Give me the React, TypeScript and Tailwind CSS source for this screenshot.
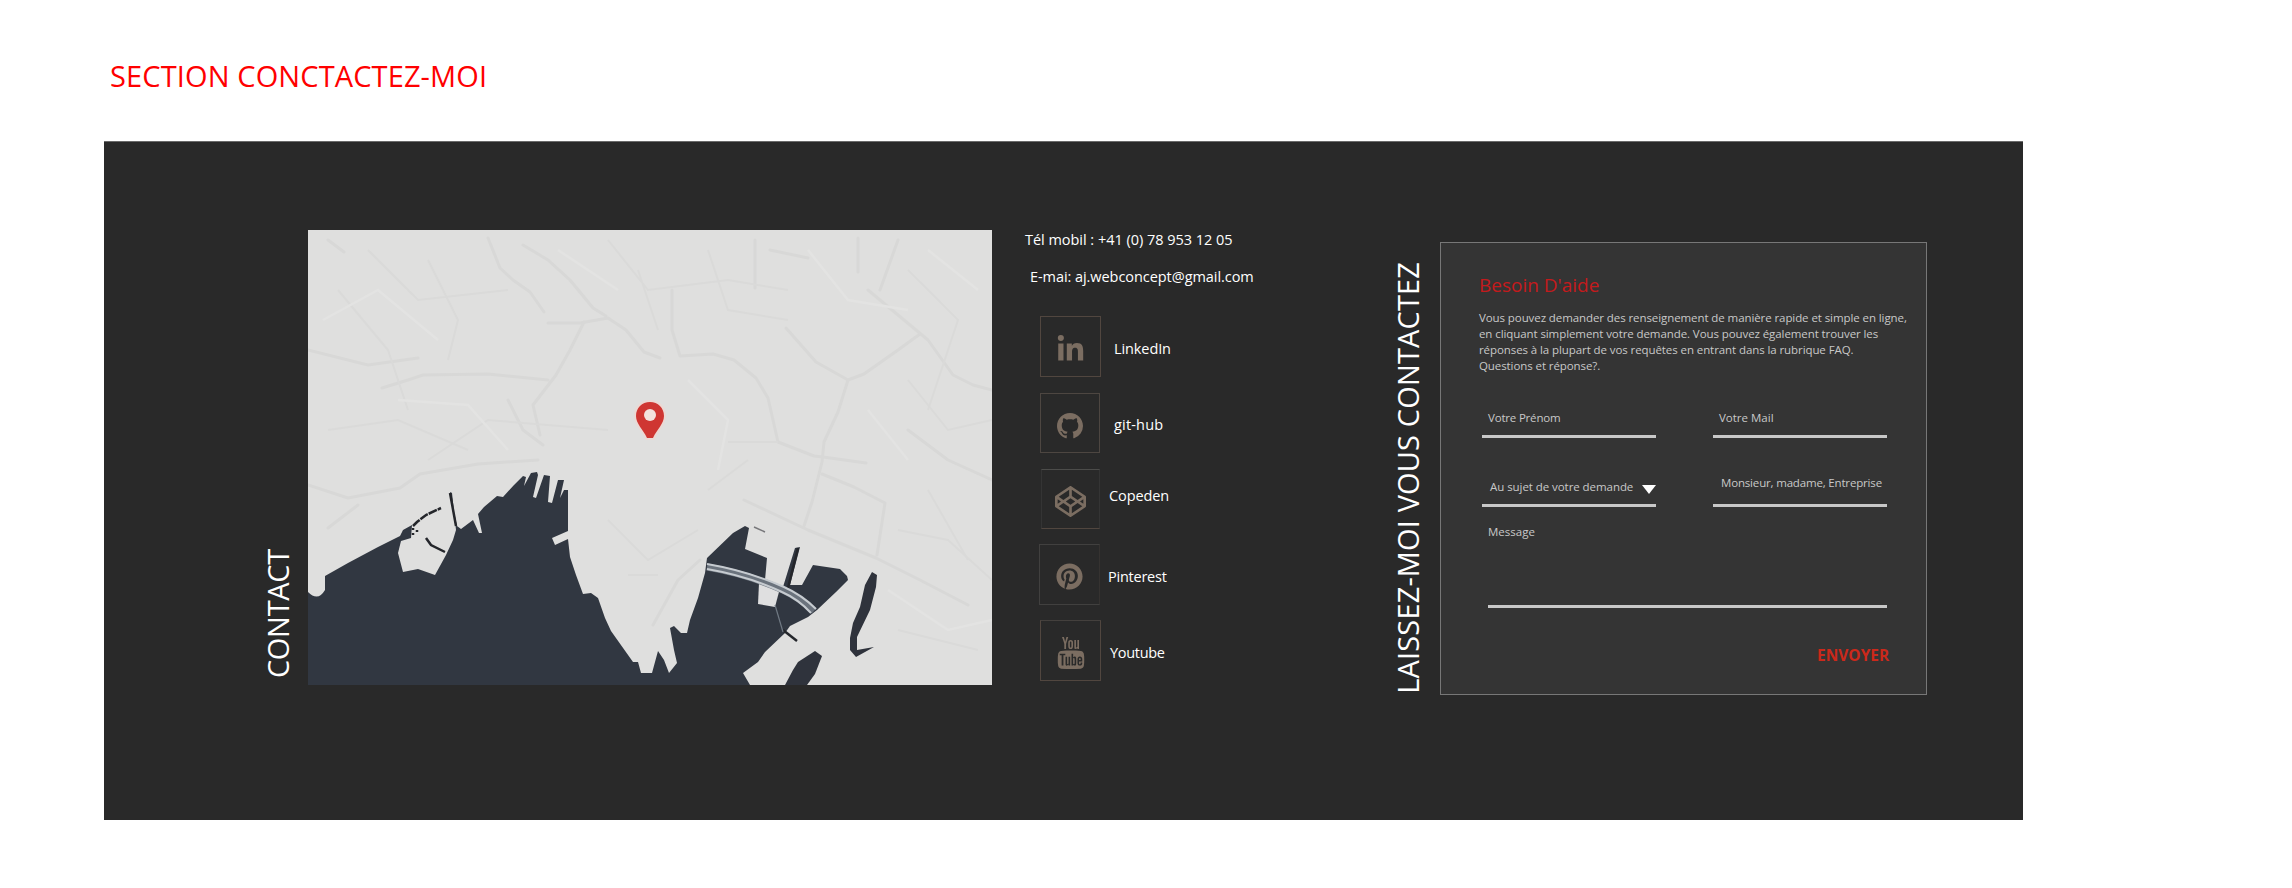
import type { ReactNode } from "react";
import { FaLinkedinIn, FaCodepen, FaPinterest } from "react-icons/fa";
import { TfiYoutube } from "react-icons/tfi";

function GithubMark({ className }: { className: string }) {
  return (
    <svg viewBox="0 0 16 16" fill="currentColor" className={className}>
      <path d="M8 0C3.58 0 0 3.58 0 8c0 3.54 2.29 6.53 5.47 7.59.4.07.55-.17.55-.38 0-.19-.01-.82-.01-1.49-2.01.37-2.53-.49-2.69-.94-.09-.23-.48-.94-.82-1.13-.28-.15-.68-.52-.01-.53.63-.01 1.08.58 1.23.82.72 1.21 1.87.87 2.33.66.07-.52.28-.87.51-1.07-1.78-.2-3.64-.89-3.64-3.95 0-.87.31-1.59.82-2.15-.08-.2-.36-1.02.08-2.12 0 0 .67-.21 2.2.82.64-.18 1.32-.27 2-.27s1.36.09 2 .27c1.53-1.04 2.2-.82 2.2-.82.44 1.1.16 1.92.08 2.12.51.56.82 1.27.82 2.15 0 3.07-1.87 3.75-3.65 3.95.29.25.54.73.54 1.48 0 1.07-.01 1.93-.01 2.2 0 .21.15.46.55.38A8.01 8.01 0 0 0 16 8c0-4.42-3.58-8-8-8z" />
    </svg>
  );
}

function CityMap() {
  return (
    <svg viewBox="0 0 684 455" className="block h-[455px] w-[684px]">
      <rect width="684" height="455" fill="#dfdfde" />

      <g fill="none" stroke="#d8d8d7" strokeWidth="3" strokeLinecap="round" strokeLinejoin="round">
        <path d="M20 10L36 22M180 8L192 38L205 50L222 62L236 82" />
        <path d="M215 15L240 30L262 50L285 78L298 86" />
        <path d="M240 93H272L300 88L318 100L336 122L352 128" />
        <path d="M276 92L262 120L248 145L225 175L232 205" />
        <path d="M74 158L100 150L115 145L180 144L240 150" />
        <path d="M0 255L40 268L92 258L112 244L170 234L230 230" />
        <path d="M20 298L50 275M0 120L60 135L110 128" />
        <path d="M364 60V100L372 126L405 124L426 130L448 148L460 168L470 212L506 226L515 227L558 233" />
        <path d="M447 10V58M550 8V42M462 20L500 28" />
        <path d="M478 98L508 132L540 150L556 144L590 120L612 104" />
        <path d="M540 150L530 182L516 212L514 232L504 272L496 296" />
        <path d="M514 244L546 257L577 273L569 325" />
        <path d="M436 270L500 300L568 328L612 350L660 375" />
        <path d="M560 60L590 85L620 110L645 145L665 155L684 160" />
        <path d="M345 395L370 350L392 330M200 170L215 200L235 215" />
        <path d="M684 250L640 230L600 200M590 10L572 60" />
      </g>
      <g fill="none" stroke="#dadad9" strokeWidth="2">
        <path d="M30 60L80 120L100 180M120 30L150 90L140 130M20 200L90 190L160 220M60 20L110 70L200 60" />
        <path d="M330 40L350 100M400 20L420 80L480 90M600 40L650 90L620 180M300 10L340 60L420 50L480 60" />
        <path d="M400 260L440 230M620 260L660 330M590 400L670 420M300 290L340 330L390 300M320 345H350" />
        <path d="M120 230L180 190L300 200M420 212H470M600 150L640 200L684 190M590 300L640 310L684 350" />
      </g>
      <g fill="none" stroke="#e3e3e2" strokeWidth="2.5">
        <path d="M15 90L70 60L130 110M90 170L160 175L200 220M250 20L310 60M380 150L420 190L410 240" />
        <path d="M500 20L540 70L600 80M560 180L600 230M620 20L670 60M580 360L640 400L684 390" />
      </g>

      <path
        fill="#313741"
        d="M0 362Q10 372 17 360V346L40 333L70 317L92 306L95 300L104 295L103 308L93 311L90 323L95 342L110 339L127 345L138 325L145 310L148 300L144 263L142 262L149 296L153 299L165 290L171 303L174 303L170 284L176 277L189 266L195 267L206 255L215 246L218 247L216 256L223 243L229 242L230 245L225 267L228 268L236 245L242 246L240 272L244 273L250 250L256 250L252 268L256 260L260 260V301L244 308L247 315L260 309L262 327L268 345L275 364L283 363L290 368L297 388L303 401L325 432L330 432L333 443L344 443L350 421L356 430L361 443L369 433L366 420L362 398L366 396L373 403L379 403L382 390L390 368L397 343L399 328L425 303L437 296L441 298L437 319L459 328L457 350L475 357L487 318L492 317L482 355L494 355L505 335L532 339L539 346L540 350L528 362L509 380L500 387L482 396L477 403L457 422L450 432L435 443L442 455H0Z"
      />
      <path d="M451 353L472 358L467 377L450 374Z" fill="#dfdfe0" />
      <g fill="#2f333c">
        <path d="M477 455L485 440L490 432L507 421L514 426L507 444L499 455Z" />
        <path d="M564 342L569 345L568 357L562 380L549 407L549 420L566 417L548 427L542 420V408L545 393L552 377L557 355Z" />
      </g>
      <g fill="none" stroke="#24262b" strokeWidth="2.5">
        <path d="M105 296L109 292L118 285L133 278" strokeDasharray="9 1" />
        <path d="M118 308L123 315L137 322" />
        <path d="M142 263L148 296M490 318L480 358" />
        <path d="M475 400L489 411" />
        <path d="M446 297L457 302" strokeWidth="1.5" stroke="#77777a" />
        <path d="M105 298V308M109 300V304" strokeDasharray="2 3" />
      </g>
      <path d="M467 375L475 402" fill="none" stroke="#707983" strokeWidth="1.2" />
      <path d="M399 337Q440 344 475 360Q492 368 506 381" fill="none" stroke="#6b737d" strokeWidth="7" />
      <path
        d="M399 334Q440 341 476 357Q494 365 508 379M399 339Q440 346 474 362Q490 369 503 383"
        fill="none"
        stroke="#c6cbd0"
        strokeWidth="2"
      />

      <path
        d="M342 172C334 172 328 178 328 186C328 194 335 199 339 208H345C349 199 356 194 356 186C356 178 350 172 342 172Z"
        fill="#cf3632"
        stroke="#ecd9d4"
        strokeWidth="4"
        paintOrder="stroke"
      />
      <circle cx="342" cy="185" r="6" fill="#f3e3de" />
    </svg>
  );
}

type SocialProps = { box: string; label: string; icon: ReactNode; children: string };

function Social({ box, label, icon, children }: SocialProps) {
  return (
    <div className="flex items-start">
      <div className={`flex shrink-0 items-start justify-center border text-[#7b6d61] ${box}`}>{icon}</div>
      <div className={`text-[14.5px] leading-5 ${label}`}>{children}</div>
    </div>
  );
}

export default function App() {
  return (
    <div className="flex h-[888px] w-[2292px] flex-col bg-white font-['Open_Sans',sans-serif] whitespace-nowrap text-white">
      <h1 className="pt-[56px] pl-[110px] text-[29px] leading-[40px] tracking-[0.12px] text-[#ff0000]">SECTION CONCTACTEZ-MOI</h1>

      <section className="mt-[45px] ml-[104px] flex h-[679px] w-[1919px] items-start border-t border-[#6a6a6a] bg-[#292929]">
        <div className="ml-[154px] flex h-[536px] w-[40px] items-end">
          <h2 className="rotate-180 text-[29px] leading-[40px] tracking-[-0.3px] [writing-mode:vertical-rl]">CONTACT</h2>
        </div>

        <div className="mt-[88px] ml-[10px]">
          <CityMap />
        </div>

        <div className="mt-[88px] ml-[33px] flex w-[300px] flex-col">
          <div className="text-[14.5px] leading-5 tracking-[-0.03px]">Tél mobil : +41 (0) 78 953 12 05</div>
          <div className="mt-[17px] ml-[5px] text-[14.5px] leading-5 tracking-[-0.06px]">E-mai: aj.webconcept@gmail.com</div>

          <div className="mt-[29px] ml-[14px] flex flex-col">
            <Social
              box="ml-px h-[61px] w-[61px] border-[#51463f] pt-[18px]"
              label="mt-[23px] ml-[13px] tracking-[-0.1px]"
              icon={<FaLinkedinIn className="h-[29px] w-[29px]" />}
            >
              LinkedIn
            </Social>
            <Social
              box="mt-[16px] ml-px h-[60px] w-[60px] border-[#4d4641] pt-[19px]"
              label="mt-[38px] ml-[14px] tracking-[0.18px]"
              icon={<GithubMark className="h-[26px] w-[26px]" />}
            >
              git-hub
            </Social>
            <Social
              box="mt-[16px] ml-[2px] h-[60px] w-[59px] border-x-[#343434] border-t-[#4c4c4a] border-b-[#51463f] pt-[16px]"
              label="mt-[33px] ml-[9px] tracking-[-0.1px]"
              icon={<FaCodepen className="h-[31px] w-[31px]" />}
            >
              Copeden
            </Social>
            <Social
              box="mt-[15px] h-[61px] w-[61px] border-[#41403f] border-r-[#353230] pt-[18px]"
              label="mt-[38px] ml-[8px] tracking-[-0.24px]"
              icon={<FaPinterest className="h-[27px] w-[27px]" />}
            >
              Pinterest
            </Social>
            <Social
              box="mt-[15px] ml-px h-[61px] w-[61px] border-[#51463f] border-t-[#44403d] pt-[16px]"
              label="mt-[38px] ml-[9px] tracking-[-0.31px]"
              icon={<TfiYoutube className="h-[32px] w-[32px]" />}
            >
              Youtube
            </Social>
          </div>
        </div>

        <div className="ml-[63px] flex h-[552px] w-[40px] items-end">
          <h2 className="rotate-180 text-[29px] leading-[40px] tracking-[0.14px] [writing-mode:vertical-rl]">
            LAISSEZ-MOI VOUS CONTACTEZ
          </h2>
        </div>

        <form className="mt-[100px] ml-[12px] flex h-[453px] w-[487px] flex-col border border-[#777777] bg-[#343434] pt-[30px] pl-[38px] text-[11.5px] leading-4 text-[#c8c8c8]">
          <h3 className="text-[19px] leading-6 text-[#c41a1c]">Besoin D'aide</h3>
          <p className="mt-[13px] tracking-[-0.085px]">
            Vous pouvez demander des renseignement de manière rapide et simple en ligne,
            <br />
            en cliquant simplement votre demande. Vous pouvez également trouver les
            <br />
            réponses à la plupart de vos requêtes en entrant dans la rubrique FAQ.
            <br />
            Questions et réponse?.
          </p>

          <div className="mt-[36px] ml-[3px] flex gap-[57px]">
            <label className="w-[174px] border-b-3 border-[#c8c8c8] pb-[9px] pl-[6px] tracking-[-0.19px]">Votre Prénom</label>
            <label className="w-[174px] border-b-3 border-[#c8c8c8] pb-[9px] pl-[6px]">Votre Mail</label>
          </div>

          <div className="mt-[37px] ml-[3px] flex h-[32px] gap-[57px]">
            <div className="flex w-[174px] items-start border-b-3 border-[#c8c8c8] pt-[4px] pl-[8px] tracking-[-0.06px]">
              <span>Au sujet de votre demande</span>
              <svg viewBox="0 0 14 9" className="mt-[6px] ml-auto h-[9px] w-[14px] shrink-0">
                <path d="M0 0H14L7 9Z" fill="#fff" />
              </svg>
            </div>
            <div className="w-[174px] border-b-3 border-[#c8c8c8] pl-[8px] tracking-[-0.17px]">Monsieur, madame, Entreprise</div>
          </div>

          <label className="mt-[17px] ml-[9px] w-[399px] border-b-3 border-[#c8c8c8] pb-[65px]">Message</label>

          <button type="button" className="mt-[37px] ml-[338px] self-start text-[15.5px] leading-5 font-bold text-[#cb291b]">
            ENVOYER
          </button>
        </form>
      </section>
    </div>
  );
}
